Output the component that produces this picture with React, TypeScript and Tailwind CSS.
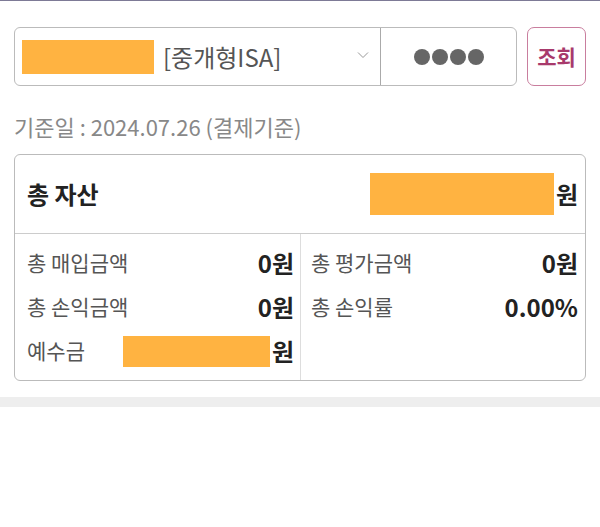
import React from "react";

const font = { fontFamily: '"Noto Sans CJK KR", "Noto Sans", sans-serif' };

function Masked({ className }: { className: string }) {
  return <span className={`inline-block bg-[#ffb341] ${className}`} />;
}

function Stat({ label, children }: { label: string; children: React.ReactNode }) {
  return (
    <div className="flex h-[44px] items-center justify-between">
      <span className="text-[21px] text-[#555]">{label}</span>
      <span className="flex items-center text-[24px] font-bold text-[#222]">{children}</span>
    </div>
  );
}

export default function App() {
  return (
    <div className="min-h-[527px] w-[600px] bg-white" style={font}>
      <div className="h-px bg-[#7d7a96]" />

      <div className="px-[14px] pt-[26px]">
        <div className="flex h-[59px] gap-[10px]">
          <div className="flex flex-1 rounded-[6px] border border-[#bbb]">
            <div className="relative flex w-[366px] items-center border-r border-[#aaa] pl-[7px]">
              <Masked className="h-[34px] w-[132px]" />
              <span className="ml-[9px] text-[24px] text-[#555]">[중개형ISA]</span>
              <svg className="absolute right-[11px] top-[23px]" width="12" height="8" viewBox="0 0 12 8">
                <path d="M1 1.5 L6 6.5 L11 1.5" fill="none" stroke="#999" strokeWidth="1" />
              </svg>
            </div>
            <div className="flex flex-1 items-center justify-center gap-[2px]">
              <span className="h-4 w-4 rounded-full bg-[#666]" />
              <span className="h-4 w-4 rounded-full bg-[#666]" />
              <span className="h-4 w-4 rounded-full bg-[#666]" />
              <span className="h-4 w-4 rounded-full bg-[#666]" />
            </div>
          </div>
          <button className="w-[59px] rounded-[7px] border border-[#c97e9e] text-[21px] font-bold text-[#a83a6c]">
            조회
          </button>
        </div>

        <div className="mt-[26px] text-[22px] leading-[28px] text-[#888]">기준일 : 2024.07.26 (결제기준)</div>

        <div className="mt-[14px] rounded-[6px] border border-[#bbb]">
          <div className="flex h-[79px] items-center justify-between border-b border-[#ccc] pl-[12px] pr-[7px]">
            <span className="text-[24px] font-bold text-[#222]">총 자산</span>
            <span className="flex items-center text-[24px] font-bold text-[#222]">
              <Masked className="mr-[2px] h-[42px] w-[184px]" />원
            </span>
          </div>
          <div className="flex">
            <div className="w-[286px] border-r border-[#ddd] pb-[7px] pl-[12px] pr-[6px] pt-[7px]">
              <Stat label="총 매입금액">0원</Stat>
              <Stat label="총 손익금액">0원</Stat>
              <Stat label="예수금">
                <Masked className="mr-[2px] h-[31px] w-[147px]" />원
              </Stat>
            </div>
            <div className="flex-1 pb-[7px] pl-[10px] pr-[7px] pt-[7px]">
              <Stat label="총 평가금액">0원</Stat>
              <Stat label="총 손익률">0.00%</Stat>
            </div>
          </div>
        </div>
      </div>

      <div className="mt-[16px] h-[10px] bg-[#eee]" />
    </div>
  );
}
